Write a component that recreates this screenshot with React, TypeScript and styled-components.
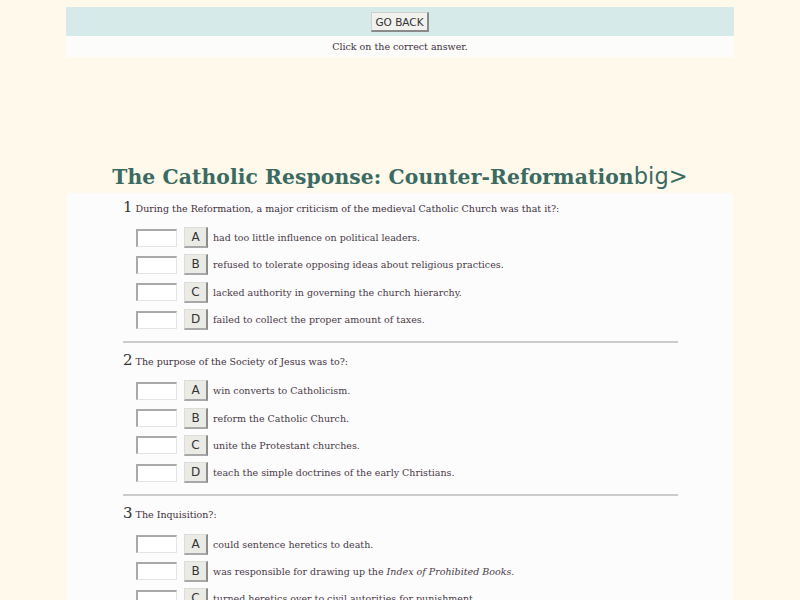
import React from 'react'
import styled, { createGlobalStyle } from 'styled-components'

interface IAnswer {
    letter: string
    text: React.ReactNode
}

interface IQuestion {
    prompt: string
    answers: IAnswer[]
}

const questions: IQuestion[] = [
    {
        prompt: 'During the Reformation, a major criticism of the medieval Catholic Church was that it?:',
        answers: [
            { letter: 'A', text: 'had too little influence on political leaders.' },
            { letter: 'B', text: 'refused to tolerate opposing ideas about religious practices.' },
            { letter: 'C', text: 'lacked authority in governing the church hierarchy.' },
            { letter: 'D', text: 'failed to collect the proper amount of taxes.' },
        ],
    },
    {
        prompt: 'The purpose of the Society of Jesus was to?:',
        answers: [
            { letter: 'A', text: 'win converts to Catholicism.' },
            { letter: 'B', text: 'reform the Catholic Church.' },
            { letter: 'C', text: 'unite the Protestant churches.' },
            { letter: 'D', text: 'teach the simple doctrines of the early Christians.' },
        ],
    },
    {
        prompt: 'The Inquisition?:',
        answers: [
            { letter: 'A', text: 'could sentence heretics to death.' },
            {
                letter: 'B',
                text: (
                    <>
                        was responsible for drawing up the <i>Index of Prohibited Books</i>.
                    </>
                ),
            },
            { letter: 'C', text: 'turned heretics over to civil autorities for punishment.' },
            { letter: 'D', text: 'was abolished by the Council of Trent.' },
        ],
    },
]

function App() {
    return (
        <>
            <GlobalStyle />
            <Frame>
                <NavBar>
                    <GoBackButton type='button'>GO BACK</GoBackButton>
                </NavBar>
                <Instruction>Click on the correct answer.</Instruction>
            </Frame>
            <Title>
                The Catholic Response: Counter-Reformation<BigTag>big&gt;</BigTag>
            </Title>
            <QuizPanel>
                {questions.map((q, i) => (
                    <QuestionBlock key={i} last={i === questions.length - 1}>
                        <Prompt>
                            <Number>{i + 1}</Number>
                            {q.prompt}
                        </Prompt>
                        {q.answers.map((a) => (
                            <AnswerRow key={a.letter}>
                                <AnswerBox type='text' />
                                <LetterButton type='button'>{a.letter}</LetterButton>
                                <AnswerText>{a.text}</AnswerText>
                            </AnswerRow>
                        ))}
                    </QuestionBlock>
                ))}
            </QuizPanel>
        </>
    )
}

const GlobalStyle = createGlobalStyle`
    html, body {
        margin: 0;
        background: #fef9ea;
    }
    body {
        font-family: 'DejaVu Serif', serif;
        color: #4a3a48;
    }
`

const Frame = styled.div`
    margin: 0 66px 0 66px;
    padding-top: 7px;
`

const NavBar = styled.div`
    display: flex;
    justify-content: center;
    align-items: center;
    height: 29px;
    background: #d6eaea;
`

const GoBackButton = styled.button`
    font-family: 'DejaVu Sans', sans-serif;
    font-size: 10.5px;
    color: #333;
    background: #f1f1ee;
    border: 1px solid #cfcfcf;
    border-right: 2px solid #8a8a8a;
    border-bottom: 2px solid #8a8a8a;
    padding: 2px 3px 1px 3px;
    height: 20px;
`

const Instruction = styled.div`
    height: 21px;
    line-height: 21px;
    background: #fcfcfa;
    text-align: center;
    font-size: 9.5px;
    color: #3e3040;
`

const Title = styled.h1`
    margin: 104px 0 0 0;
    height: 32px;
    line-height: 30px;
    text-align: center;
    font-family: 'DejaVu Serif', serif;
    font-size: 20.3px;
    font-weight: bold;
    color: #3b6a62;
    letter-spacing: 0.1px;
`

const BigTag = styled.span`
    font-family: 'DejaVu Sans', sans-serif;
    font-weight: normal;
    font-size: 22.5px;
`

const QuizPanel = styled.div`
    margin: 0 67px 0 67px;
    background: #fcfcfc;
    padding: 5px 0 20px 0;
`

const QuestionBlock = styled.div<{ last: boolean }>`
    margin: 0 55px 8px 56px;
    padding-bottom: 8px;
    border-bottom: ${(props) => (props.last ? 'none' : '2px solid #cbcbcb')};
`

const Prompt = styled.div`
    display: flex;
    align-items: baseline;
    font-size: 9.5px;
    color: #3f3040;
    margin-bottom: 8px;
`

const Number = styled.span`
    font-size: 15px;
    color: #333;
    margin-right: 3px;
`

const AnswerRow = styled.div`
    display: flex;
    align-items: center;
    height: 27.3px;
    padding-left: 13px;
`

const AnswerBox = styled.input`
    box-sizing: border-box;
    width: 41px;
    height: 18px;
    margin: 0 7px 0 0;
    padding: 0;
    background: #ffffff;
    border: 1px solid #e4e4e4;
    border-top: 2px solid #a9a9a9;
    border-left: 2px solid #a9a9a9;
`

const LetterButton = styled.button`
    box-sizing: border-box;
    width: 24px;
    height: 21px;
    margin: 0 5px 0 0;
    padding: 0;
    font-family: 'DejaVu Sans', sans-serif;
    font-size: 12px;
    color: #333;
    background: #ebebe6;
    border: 1px solid #dcdcd8;
    border-right: 2px solid #8c8c8c;
    border-bottom: 2px solid #a8a8a8;
`

const AnswerText = styled.span`
    font-size: 9.5px;
    color: #4a3a48;
`

export default App
